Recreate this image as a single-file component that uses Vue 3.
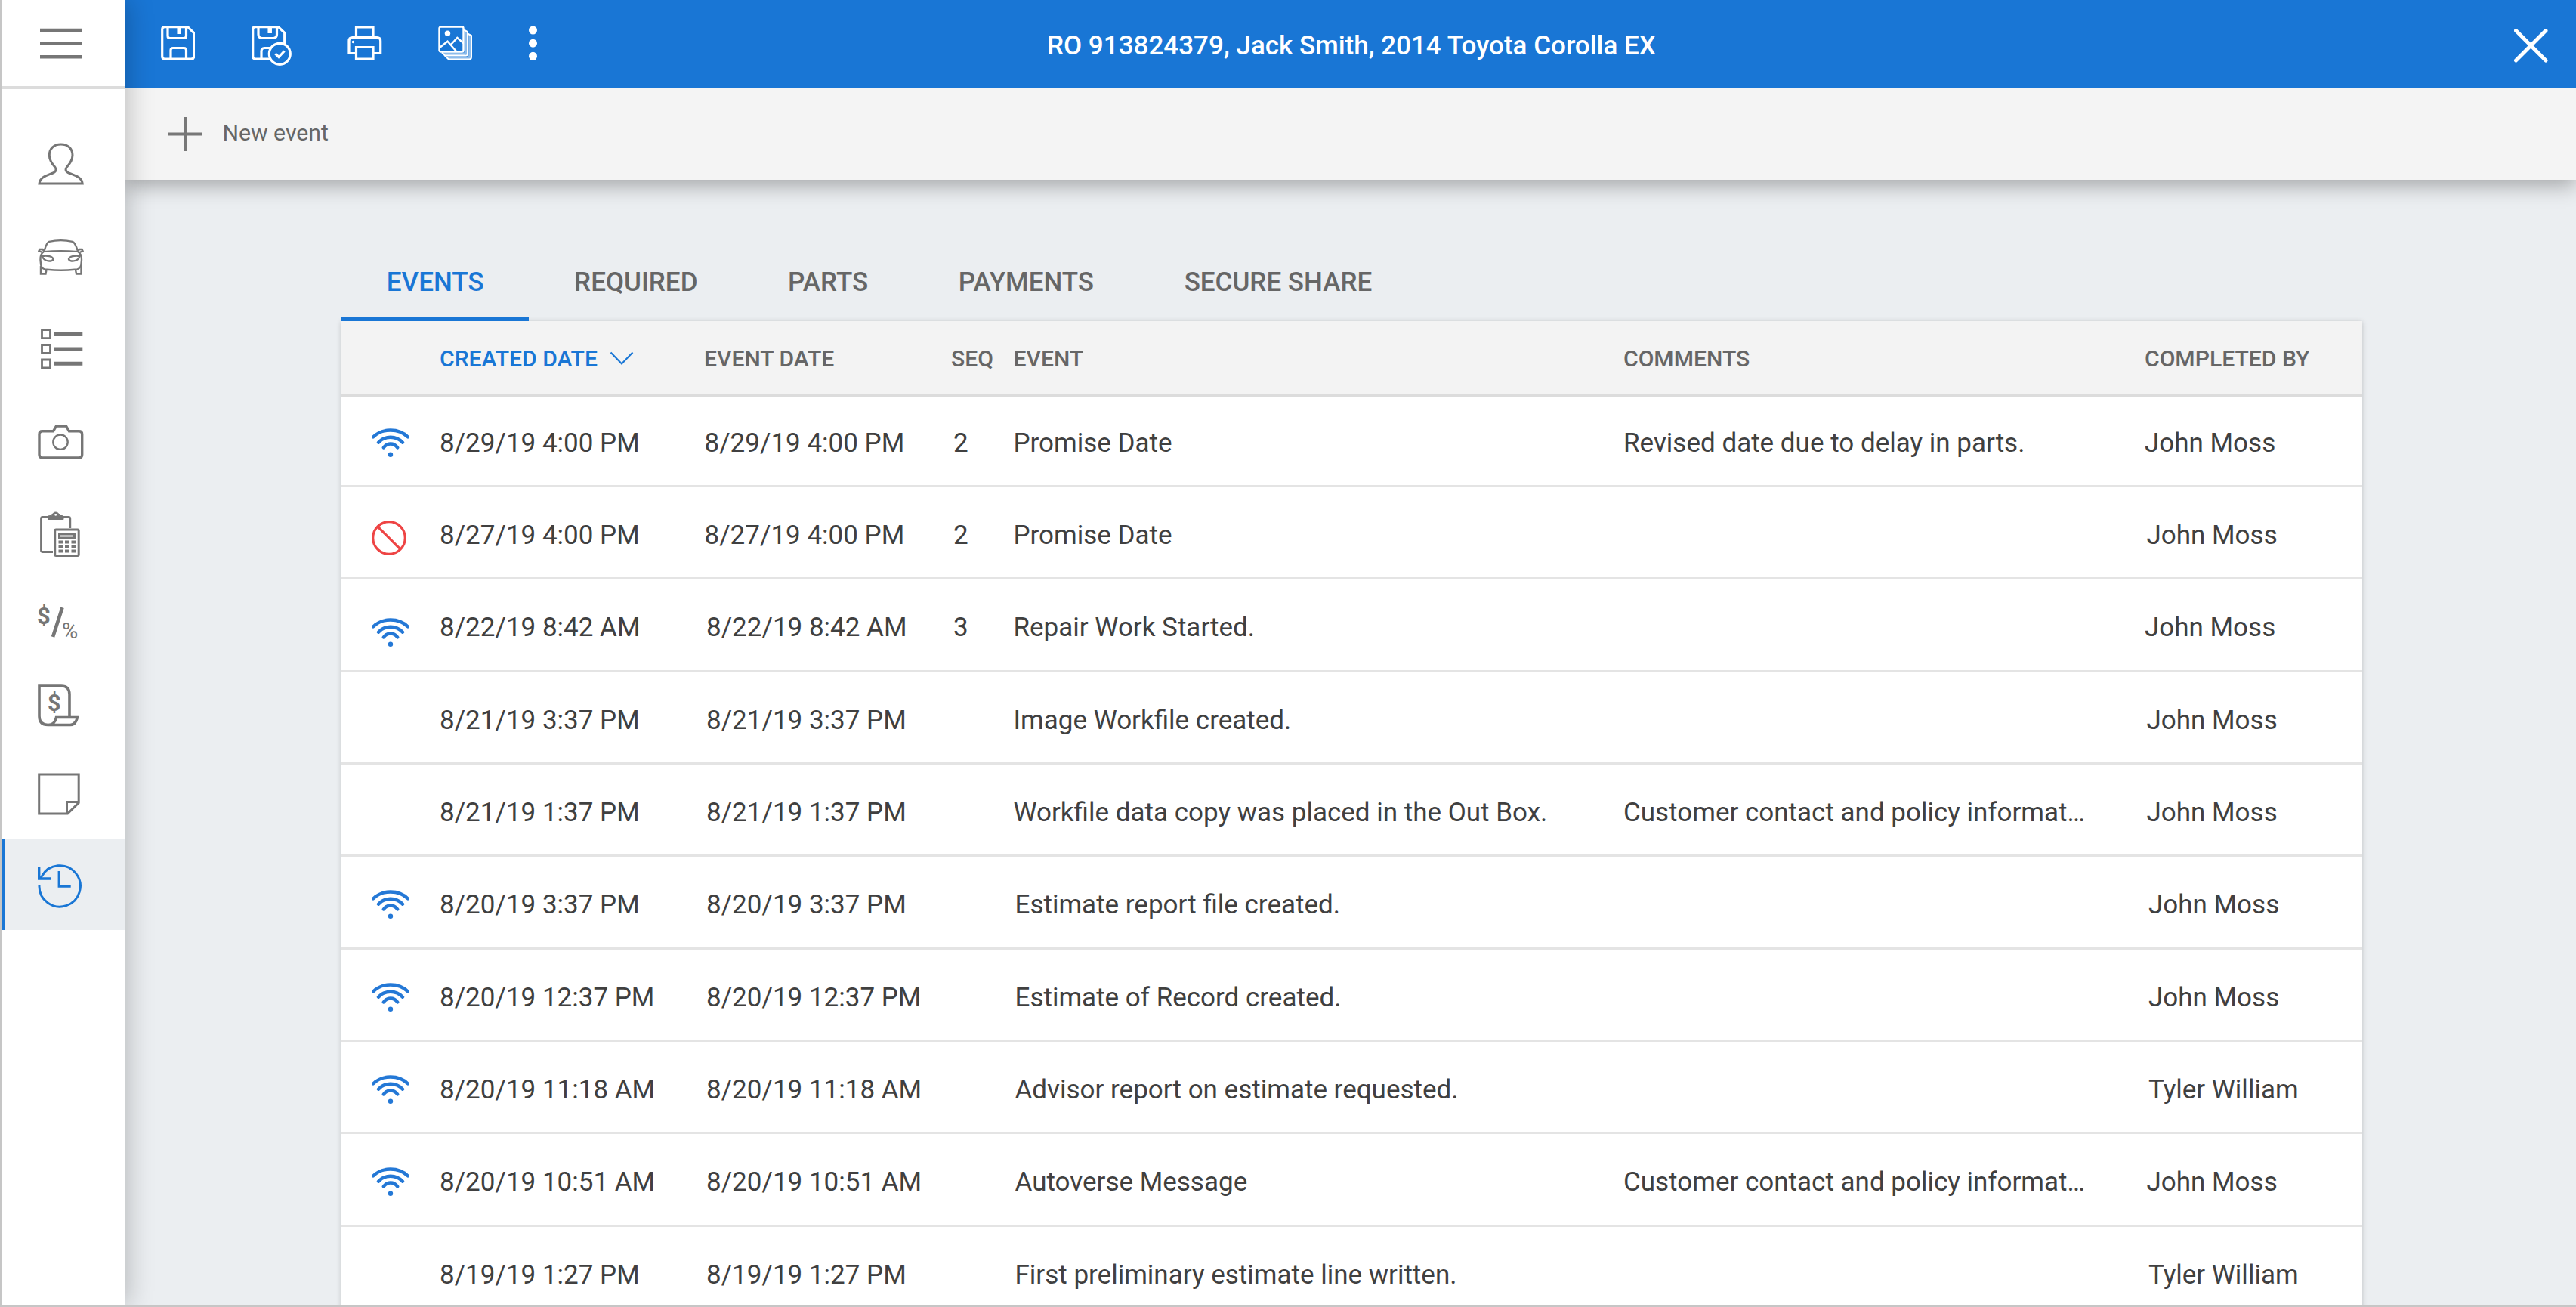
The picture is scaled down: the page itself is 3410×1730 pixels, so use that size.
<template>
  <div class="app">
    <aside class="sidebar">
      <button class="menu-toggle">
        <svg width="55" height="41" viewBox="0 0 55 41">
          <path d="M0 3h55M0 20.7h55M0 38.3h55" stroke="#767676" stroke-width="4.6" />
        </svg>
      </button>
      <nav class="side-nav">
        <a class="side-item">
          <svg class="side-icon" viewBox="0 0 64 64">
            <path
              d="M4 58C5 50 13 47.5 19 45.2C26 43 27.500 40 25 36.500C21 32 17.300 27 17.300 20.500C17.300 11.500 23.500 6 32.600 6S48 11.500 48 20.500C48 27 44.200 32 40.200 36.500C37.700 40 39.200 43 46.200 45.200C52.200 47.500 60.200 50 61.200 58Z"
            />
          </svg>
        </a>
        <a class="side-item">
          <svg class="side-icon thin" viewBox="0 0 64 64">
            <path d="M10.500 24.500C12 20 13 13.500 17 11.800C26 9.800 39 9.800 48 11.800C52 13.500 53.500 20 55 24.500" />
            <path d="M10 24.800C24 23.800 41 23.800 55 24.800" stroke-width="1.800" />
            <path d="M10.500 24.500L8.500 22H4.500L3.500 24.200L8 26M55 24.500L57 22H60.500L61.500 24.200L57.500 26" />
            <path d="M10 25C6 27.500 5.300 31 5.500 36L6.200 43C7.500 47.500 10 48.800 14 48.800C26 50 40 50 51 48.800C55 48.800 58 47.500 59.300 43L60 36C60.200 31 59 27.500 55 25" />
            <path d="M6 44V54.500H12.500L13.500 49M59.500 44V54.500H53L52 49" />
            <path d="M8 31C14 29.500 22 31.500 22.500 35C22 38.800 10 39 8 31ZM57.500 31C51.500 29.500 43.500 31.500 43 35C43.500 38.800 55.500 39 57.500 31Z" />
          </svg>
        </a>
        <a class="side-item">
          <svg class="side-icon" viewBox="0 0 64 64">
            <path d="M7.500 6.700h11v11h-11zM7.500 26.500h11v11h-11zM7.500 46h11v11h-11z" stroke-width="2.800" />
            <path d="M24 12.500h37.300M24 31.900h37.300M24 51.300h37.300" stroke-width="5" />
          </svg>
        </a>
        <a class="side-item">
          <svg class="side-icon" viewBox="0 0 64 64">
            <path
              d="M8 17.800H22.500L26.500 11H39.500L43.500 17.800H56.500Q60.700 17.800 60.700 22V48.700Q60.700 52.900 56.500 52.900H8Q4 52.900 4 48.700V22Q4 17.800 8 17.800Z"
              stroke-width="3.400"
            />
            <circle cx="32" cy="32.200" r="9.700" stroke-width="2.400" />
          </svg>
        </a>
        <a class="side-item">
          <svg class="side-icon" viewBox="0 0 64 64">
            <path d="M22 55.500H8.500Q6.500 55.500 6.500 53.500V11.500Q6.500 9.500 8.500 9.500H42.500Q44.800 9.500 44.800 11.500V24" stroke-width="2.800" />
            <path d="M16 12.500V8.500Q16 7.500 17.500 7.500H20.500Q22 3 25.700 3T31 7.500H34.500Q36 7.500 36 8.500V12.500Z" class="solid" />
            <circle cx="25.700" cy="6.500" r="1.300" fill="#fff" stroke="none" />
            <rect x="24.700" y="26" width="31.500" height="34.500" rx="1.500" stroke-width="3" />
            <rect x="30.500" y="32" width="20" height="5" stroke-width="3" />
            <path d="M29.500 42.500h22.500M29.500 48.500h22.500M29.500 54.500h22.500" stroke-width="4" stroke-dasharray="5.500 3" />
          </svg>
        </a>
        <a class="side-item money">
          <svg class="side-icon" viewBox="0 0 64 64">
            <text x="1" y="34.800" class="glyph bold">$</text>
            <path d="M34.500 13.300L22 52" stroke-width="4.600" />
            <text x="34" y="53.700" class="glyph small">%</text>
          </svg>
        </a>
        <a class="side-item receipt">
          <svg class="side-icon" viewBox="0 0 64 64">
            <path
              d="M44 48V18Q44 7 33 7H4V47Q4 58.500 15.500 58.500H45Q52 58.500 54.500 48.500H26.500Q24.500 58.500 15.500 58.500"
              stroke-width="3.600"
            />
            <text x="23.700" y="39.800" text-anchor="middle" class="glyph bold">$</text>
          </svg>
        </a>
        <a class="side-item note">
          <svg class="side-icon" viewBox="0 0 64 64">
            <path d="M3.700 7H56.200V44.500L41.500 59H3.700ZM40.500 59V43.500H56" />
          </svg>
        </a>
        <a class="side-item active">
          <svg class="side-icon" viewBox="0 0 64 64">
            <path d="M4 32.700A27.200 27.200 0 1 0 7.500 20.500L5 24" />
            <path d="M3.700 9V24H19.300M30.300 14V34H45.700" stroke-width="3.400" />
          </svg>
        </a>
      </nav>
    </aside>

    <div class="main">
      <header class="topbar">
        <div class="actions">
          <svg width="45.500" height="46" viewBox="0 0 45.500 46">
            <path d="M5 1.700H35.500L43.700 9.500V40.500Q43.700 44 40 44H5Q1.700 44 1.700 40.500V5Q1.700 1.700 5 1.700Z" />
            <path d="M9 2V13.500Q9 16.500 12 16.500H30.500Q33.500 16.500 33.500 13.500V2M13 44V32.500Q13 29.500 16 29.500H30.500Q33.500 29.500 33.500 32.500V44" />
            <path d="M24.200 2V11" stroke-width="5.500" />
          </svg>
          <svg width="53" height="54" viewBox="0 0 53 54">
            <path d="M5 1.700H35.500L43.700 9.500V40.500Q43.700 44 40 44H5Q1.700 44 1.700 40.500V5Q1.700 1.700 5 1.700Z" />
            <path d="M9 2V11.500Q9 16.500 14 16.500H28.500Q33.500 16.500 33.500 11.500V2M13 44V34Q13 29.500 17 29.500H30" />
            <path d="M24.200 2V10" stroke-width="5.500" />
            <circle cx="37.300" cy="37.300" r="14" fill="#1976d5" />
            <path d="M31.500 37L36 41.500L43.500 33.500" />
          </svg>
          <svg width="45.500" height="46" viewBox="0 0 45.500 46">
            <path d="M11.500 15.500V2H34V15.500M11.500 36.500H2V20.500Q2 15.700 6.500 15.700H39Q43.700 15.700 43.700 20.500V36.500H34" />
            <path d="M11.500 28.500H34V44H11.500Z" />
            <circle cx="7.500" cy="21.500" r="1.800" fill="#fff" stroke="none" />
          </svg>
          <svg width="45.500" height="46" viewBox="0 0 45.500 46">
            <path d="M36.500 7V35Q36.500 37.300 34 37.300H7M42 12V40Q42 42.500 39 42.500H12" stroke-width="3.500" opacity="0.5" />
            <path d="M34 5.500L39 8V37Q39 39.500 36.500 39.500H9L5 35.500M39 10.500L44 13V41.500Q44 44.500 41 44.500H14L9 40" stroke-width="2" />
            <rect x="1.500" y="1.500" width="32" height="33" rx="2" stroke-width="2.400" />
            <circle cx="12.500" cy="10.200" r="3.700" fill="#fff" stroke="none" />
            <path d="M2 29L12.500 20.700L24.500 34.500M16.500 25.500L25.300 16L33.500 23" stroke-width="2.400" />
          </svg>
          <svg width="11" height="46" viewBox="0 0 11 46">
            <g fill="#fff" stroke="none">
              <circle cx="5.500" cy="6" r="5.500" />
              <circle cx="5.500" cy="23.200" r="5.500" />
              <circle cx="5.500" cy="40.300" r="5.500" />
            </g>
          </svg>
        </div>
        <h1 class="title">RO 913824379, Jack Smith, 2014 Toyota Corolla EX</h1>
        <svg class="close" width="45" height="45" viewBox="0 0 45 45">
          <path d="M2.500 2.500L42 42M42 2.500L2.500 42" stroke-width="5" stroke-linecap="round" />
        </svg>
      </header>

      <div class="subbar">
        <svg width="45" height="45" viewBox="0 0 45 45">
          <path d="M0 22.500H45M22.500 0V45" stroke="#777" stroke-width="4" />
        </svg>
        <span>New event</span>
      </div>

      <section class="content">
        <div class="tabs">
          <button
            v-for="tab in tabs"
            :key="tab"
            class="tab"
            :class="{ active: tab === activeTab }"
            @click="activeTab = tab"
          >
            {{ tab }}
          </button>
        </div>

        <div class="table">
          <div class="row head">
            <span></span>
            <span class="sorted">
              CREATED DATE
              <svg width="32" height="19" viewBox="0 0 32 19">
                <path d="M1.500 1.500L16 16.500L30.500 1.500" fill="none" stroke="#1976d5" stroke-width="2.200" />
              </svg>
            </span>
            <span>EVENT DATE</span>
            <span>SEQ</span>
            <span>EVENT</span>
            <span>COMMENTS</span>
            <span>COMPLETED BY</span>
          </div>
          <div v-for="(row, i) in rows" :key="i" class="row" :class="'row-' + (i + 1)">
            <span class="status">
              <svg v-if="row.icon === 'wifi'" class="wifi" width="50" height="39" viewBox="0 0 50 39">
                <path d="M2 11.500Q11 2.500 25 2.500T48 11.500M9 18.700Q15.500 11.700 25 11.700T41 18.700M15.800 25.500Q19.500 20.500 25 20.500T34.200 25.500" />
                <circle cx="25" cy="34.800" r="3.200" />
              </svg>
              <svg v-else-if="row.icon === 'blocked'" class="blocked" width="46" height="46" viewBox="0 0 46 46">
                <circle cx="23" cy="23" r="21.300" />
                <path d="M8 8L38 38" />
              </svg>
            </span>
            <span>{{ row.created }}</span>
            <span class="event-date">{{ row.created }}</span>
            <span class="seq">{{ row.seq }}</span>
            <span class="event">{{ row.event }}</span>
            <span>{{ row.comments }}</span>
            <span class="completed">{{ row.by }}</span>
          </div>
        </div>
      </section>
    </div>
  </div>
</template>

<script setup>
import { ref } from "vue";

const tabs = ["EVENTS", "REQUIRED", "PARTS", "PAYMENTS", "SECURE SHARE"];
const activeTab = ref("EVENTS");

const rows = [
  {
    icon: "wifi",
    created: "8/29/19 4:00 PM",
    seq: 2,
    event: "Promise Date",
    comments: "Revised date due to delay in parts.",
    by: "John Moss",
  },
  { icon: "blocked", created: "8/27/19 4:00 PM", seq: 2, event: "Promise Date", by: "John Moss" },
  { icon: "wifi", created: "8/22/19 8:42 AM", seq: 3, event: "Repair Work Started.", by: "John Moss" },
  { created: "8/21/19 3:37 PM", event: "Image Workfile created.", by: "John Moss" },
  {
    created: "8/21/19 1:37 PM",
    event: "Workfile data copy was placed in the Out Box.",
    comments: "Customer contact and policy informat…",
    by: "John Moss",
  },
  { icon: "wifi", created: "8/20/19 3:37 PM", event: "Estimate report file created.", by: "John Moss" },
  { icon: "wifi", created: "8/20/19 12:37 PM", event: "Estimate of Record created.", by: "John Moss" },
  { icon: "wifi", created: "8/20/19 11:18 AM", event: "Advisor report on estimate requested.", by: "Tyler William" },
  {
    icon: "wifi",
    created: "8/20/19 10:51 AM",
    event: "Autoverse Message",
    comments: "Customer contact and policy informat…",
    by: "John Moss",
  },
  { created: "8/19/19 1:27 PM", event: "First preliminary estimate line written.", by: "Tyler William" },
];
</script>

<style>
body {
  margin: 0;
  overflow: hidden;
}
</style>

<style scoped>
.app {
  display: flex;
  width: 3410px;
  height: 1730px;
  box-sizing: border-box;
  border-left: 2px solid #c6c6c6;
  border-bottom: 2px solid #c6c6c6;
  background: #ebeef1;
  font-family: Roboto, "Liberation Sans", sans-serif;
  color: #404040;
  overflow: hidden;
}

button {
  border: 0;
  padding: 0;
  background: none;
  font: inherit;
  color: inherit;
}

svg {
  display: block;
  flex: none;
}

/* Sidebar */
.sidebar {
  position: relative;
  z-index: 3;
  flex: none;
  width: 164.4px;
  background: #fff;
  box-shadow: 4px 0 32px rgba(0, 0, 0, 0.22);
}

.menu-toggle {
  display: flex;
  width: 100%;
  height: 118px;
  box-sizing: border-box;
  padding: 37px 0 0 51px;
  border-bottom: 4px solid #dcdcdc;
}

.side-nav {
  display: flex;
  flex-direction: column;
  padding-top: 38.2px;
}

.side-item {
  display: flex;
  align-items: center;
  height: 122.5px;
  padding-left: 46px;
}

.side-item.money {
  height: 108px;
}

.side-item.receipt {
  height: 113px;
}

.side-item.note {
  height: 121px;
}

.side-item.active {
  height: 120px;
  padding-left: 41px;
  border-left: 5px solid #1976d5;
  background: #ebeef1;
}

.side-icon {
  width: 64px;
  height: 64px;
  fill: none;
  stroke: #767676;
  stroke-width: 3;
}

.side-icon.thin {
  stroke-width: 2.4;
}

.side-icon .solid {
  fill: #767676;
  stroke-width: 1;
}

.active .side-icon {
  stroke: #1976d5;
}

.glyph {
  fill: #767676;
  stroke: none;
  font-size: 29px;
}

.glyph.bold {
  font-size: 31px;
  font-weight: 700;
}

/* Top bars */
.main {
  display: flex;
  flex: 1;
  flex-direction: column;
  min-width: 0;
}

.topbar {
  position: relative;
  z-index: 2;
  display: grid;
  flex: none;
  grid-template-columns: 1fr auto 1fr;
  height: 117.3px;
  padding: 0 45px 0 46.600px;
  background: #1976d5;
  color: #fff;
}

.topbar svg {
  fill: none;
  stroke: #fff;
  stroke-width: 3.2;
}

.actions {
  display: flex;
  gap: 74.4px;
  padding-top: 34.3px;
}

.title {
  margin: 0;
  font-size: 35px;
  font-weight: 500;
  line-height: 121px;
}

.close {
  justify-self: end;
  margin: 37.5px -8px 0 0;
}

.subbar {
  position: relative;
  z-index: 1;
  display: flex;
  flex: none;
  align-items: center;
  gap: 26.5px;
  height: 120.7px;
  padding-left: 56.5px;
  background: #f4f4f4;
  box-shadow: 0 8px 26px rgba(0, 0, 0, 0.3);
  font-size: 30.2px;
  color: #666;
}

.subbar span {
  margin-top: -4px;
}

/* Events table */
.content {
  width: 2675px;
  margin: 95.5px 0 0 285.6px;
}

.tabs {
  display: flex;
  height: 92px;
}

.tab {
  padding: 0 59.8px 4px;
  border-bottom: 6px solid transparent;
  font-size: 35px;
  font-weight: 500;
  line-height: 78px;
  color: #666;
}

.tab.active {
  border-color: #1976d5;
  color: #1976d5;
}

.table {
  background: #fff;
  box-shadow: 0 1px 7px rgba(0, 0, 0, 0.2);
}

.row {
  display: grid;
  grid-template-columns: 130px 350px 327px 82.5px 807.5px 690px 1fr;
  align-items: center;
  height: 122.35px;
  box-sizing: border-box;
  padding-top: 8px;
  border-bottom: 3px solid #e4e4e4;
  font-size: 35px;
  white-space: nowrap;
}

.row.head {
  position: relative;
  height: 100px;
  margin-bottom: -3px;
  padding-top: 2px;
  border-bottom: 4px solid #dcdcdc;
  background: #f3f3f3;
  font-size: 30.1px;
  font-weight: 500;
  color: #666;
}

.sorted {
  display: flex;
  align-items: center;
  gap: 16px;
  color: #1976d5;
}

.status {
  padding-left: 40px;
}

.wifi {
  fill: none;
  stroke: #2478d6;
  stroke-width: 4.4;
  stroke-linecap: round;
}

.wifi circle {
  fill: #2478d6;
  stroke: none;
}

.blocked {
  fill: none;
  stroke: #ee4444;
  stroke-width: 3.2;
}

.seq {
  padding-left: 3px;
}

.event-date {
  padding-left: 3px;
}

.row-1 .event-date,
.row-2 .event-date {
  padding-left: 0.5px;
}

.row-2 .status {
  padding-top: 7px;
}

.row-3 .status {
  padding-top: 14px;
}

.row-2 .completed,
.row-4 .completed,
.row-5 .completed,
.row-9 .completed {
  padding-left: 2.5px;
}

.row-6 .completed,
.row-7 .completed,
.row-8 .completed,
.row-10 .completed {
  padding-left: 5px;
}

.row-6 .event,
.row-7 .event,
.row-8 .event,
.row-9 .event,
.row-10 .event {
  padding-left: 2px;
}
</style>
